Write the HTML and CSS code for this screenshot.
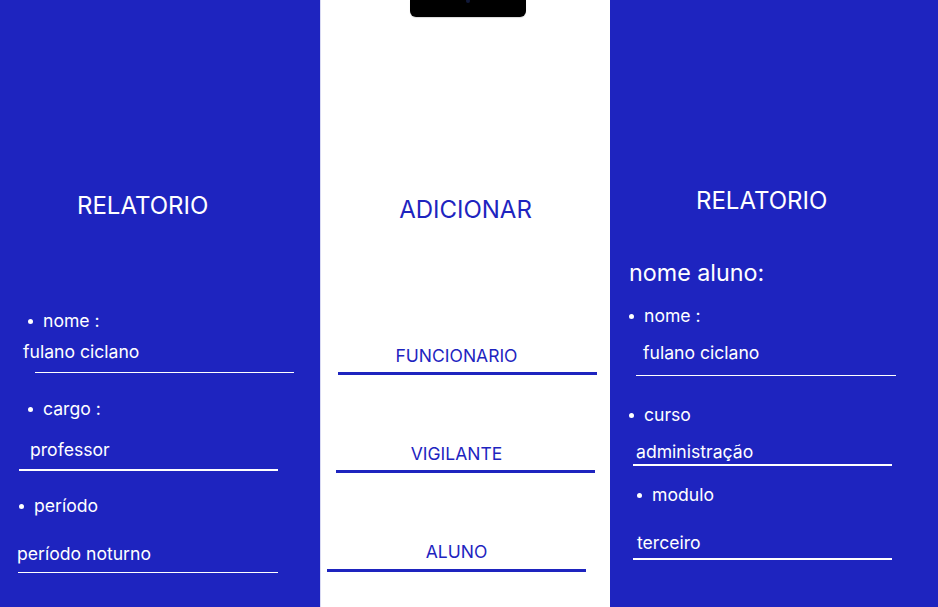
FILE: index.html
```html
<!DOCTYPE html>
<html lang="pt-BR">
<head>
    <meta charset="UTF-8">
    <meta name="viewport" content="width=device-width, initial-scale=1.0">
    <title>Relatorio</title>
    <link rel="stylesheet" href="styles.css">
</head>
<body>
    <div class="screens">
        <!-- relatorio funcionario -->
        <div class="panel panel-left">
            <h2 class="title title-left">RELATORIO</h2>
            <div class="item item-nome">nome :</div>
            <div class="value value-fulano">fulano ciclano</div>
            <div class="rule rule-1"></div>
            <div class="item item-cargo">cargo :</div>
            <div class="value value-professor">professor</div>
            <div class="rule rule-2"></div>
            <div class="item item-periodo">período</div>
            <div class="value value-noturno">período noturno</div>
            <div class="rule rule-3"></div>
        </div>

        <!-- adicionar -->
        <div class="panel panel-middle">
            <div class="notch"><span class="camera"></span></div>
            <h2 class="title title-middle">ADICIONAR</h2>
            <div class="option option-funcionario">
                <div class="option-label">FUNCIONARIO</div>
                <div class="option-line"></div>
            </div>
            <div class="option option-vigilante">
                <div class="option-label">VIGILANTE</div>
                <div class="option-line"></div>
            </div>
            <div class="option option-aluno">
                <div class="option-label">ALUNO</div>
                <div class="option-line"></div>
            </div>
        </div>

        <!-- relatorio aluno -->
        <div class="panel panel-right">
            <h2 class="title title-right">RELATORIO</h2>
            <div class="subtitle">nome aluno:</div>
            <div class="item item-aluno">nome :</div>
            <div class="value value-aluno">fulano ciclano</div>
            <div class="rule rule-4"></div>
            <div class="item item-curso">curso</div>
            <div class="value value-curso">administração</div>
            <div class="rule rule-5"></div>
            <div class="item item-modulo">modulo</div>
            <div class="value value-modulo">terceiro</div>
            <div class="rule rule-6"></div>
        </div>
    </div>
</body>
</html>
```

FILE: styles.css
```css
body {
    margin: 0;
    font-family: Inter, "Noto Sans", sans-serif;
    background-color: #1e24bf;
}
.screens {
    display: flex;
    height: 607px;
    overflow: hidden;
}
.panel {
    display: flex;
    flex-direction: column;
    align-items: flex-start;
}
.panel-left {
    width: 320px;
    background-color: #1e24bf;
    color: #fff;
}
.panel-middle {
    width: 289px;
    background-color: #fff;
    border-left: 1px solid #d9daf3;
    color: #1e24bf;
    position: relative;
    align-items: stretch;
}
.panel-right {
    flex: 1;
    background-color: #1e24bf;
    color: #fff;
}

/* top notch of the phone frame */
.notch {
    position: absolute;
    top: 0;
    left: 89px;
    width: 116px;
    height: 17px;
    background-color: #000;
    border-radius: 0 0 6px 6px;
    box-shadow: 0 1px 1px rgba(0, 0, 0, 0.15);
}
.camera {
    position: absolute;
    top: -1px;
    left: 56px;
    width: 4px;
    height: 4px;
    border-radius: 50%;
    background-color: #101838;
}

.title {
    margin: 0;
    font-size: 24px;
    font-weight: 400;
    line-height: 30px;
}
.title-left {
    margin: 191px 0 0 77px;
}
.title-middle {
    margin-top: 195px;
    text-align: center;
}
.title-right {
    margin: 186px 0 0 86px;
}
.subtitle {
    margin: 43px 0 0 19px;
    font-size: 23.3px;
    line-height: 28px;
}

.item,
.value {
    font-size: 17.6px;
    line-height: 22px;
}
.item {
    display: flex;
    align-items: center;
    gap: 10px;
}
.item::before {
    content: "";
    width: 5px;
    height: 5px;
    border-radius: 50%;
    background-color: #fff;
}
.rule {
    width: 259px;
    height: 1px;
    background-color: #fff;
}

/* left column */
.item-nome { margin: 89px 0 0 28px; }
.value-fulano { margin: 9px 0 0 23px; }
.rule-1 { margin: 9px 0 0 35px; }
.item-cargo { margin: 25px 0 0 28px; }
.value-professor { margin: 19px 0 0 30px; }
.rule-2 { margin: 8px 0 0 19px; height: 2px; }
.item-periodo { margin: 24px 0 0 19px; }
.value-noturno { margin: 26px 0 0 17px; }
.rule-3 { margin: 7px 0 0 18px; width: 260px; }

/* middle column */
.option-label {
    font-size: 17.5px;
    line-height: 22px;
    text-align: center;
    padding-right: 18px;
}
.option-line {
    width: 259px;
    height: 3px;
    background-color: #1e24bf;
}
.option-funcionario { margin-top: 120px; }
.option-funcionario .option-line { margin: 5px 0 0 17px; }
.option-vigilante { margin-top: 68px; }
.option-vigilante .option-line { margin: 5px 0 0 15px; }
.option-aluno { margin-top: 68px; }
.option-aluno .option-line { margin: 6px 0 0 6px; }

/* right column */
.item-aluno { margin: 18px 0 0 19px; }
.value-aluno { margin: 15px 0 0 33px; }
.rule-4 { margin: 11px 0 0 26px; width: 260px; }
.item-curso { margin: 28px 0 0 19px; }
.value-curso { margin: 15px 0 0 26px; }
.rule-5 { margin: 1px 0 0 23px; height: 2px; }
.item-modulo { margin: 18px 0 0 27px; }
.value-modulo { margin: 26px 0 0 27px; }
.rule-6 { margin: 4px 0 0 23px; height: 2px; }
```
